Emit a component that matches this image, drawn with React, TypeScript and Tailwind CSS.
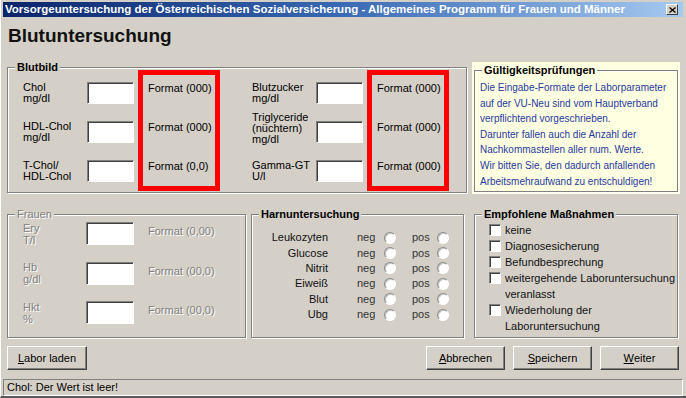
import type { ReactNode } from 'react';

interface LabRow {
  label: string[];
  format: string;
  nudge?: string;
}

const blutLeft: LabRow[] = [
  { label: ['Chol', 'mg/dl'], format: 'Format (000)' },
  { label: ['HDL-Chol', 'mg/dl'], format: 'Format (000)' },
  { label: ['T-Chol/', 'HDL-Chol'], format: 'Format (0,0)' },
];

const blutRight: LabRow[] = [
  { label: ['Blutzucker', 'mg/dl'], format: 'Format (000)' },
  { label: ['Triglyceride', '(nüchtern)', 'mg/dl'], format: 'Format (000)', nudge: 'leading-[10px] -translate-y-[4px]' },
  { label: ['Gamma-GT', 'U/l'], format: 'Format (000)' },
];

const frauenRows: LabRow[] = [
  { label: ['Ery', 'T/l'], format: 'Format (0,00)' },
  { label: ['Hb', 'g/dl'], format: 'Format (00,0)' },
  { label: ['Hkt', '%'], format: 'Format (00,0)' },
];

const harnRows = ['Leukozyten', 'Glucose', 'Nitrit', 'Eiweiß', 'Blut', 'Ubg'];

const massnahmen: string[][] = [
  ['keine'],
  ['Diagnosesicherung'],
  ['Befundbesprechung'],
  ['weitergehende Laboruntersuchung', 'veranlasst'],
  ['Wiederholung der', 'Laboruntersuchung'],
];

const hinweis = [
  'Die Eingabe-Formate der Laborparameter',
  'auf der VU-Neu sind vom Hauptverband',
  'verpflichtend vorgeschrieben.',
  'Darunter fallen auch die Anzahl der',
  'Nachkommastellen aller num. Werte.',
  'Wir bitten Sie, den dadurch anfallenden',
  'Arbeitsmehraufwand zu entschuldigen!',
];

function GroupBox({
  title,
  className = '',
  legendClass = 'bg-[#d4d0c8] font-bold text-black',
  children,
}: {
  title: string;
  className?: string;
  legendClass?: string;
  children: ReactNode;
}) {
  return (
    <div
      className={`relative border border-[#808080] shadow-[inset_1px_1px_0_#ffffff,1px_1px_0_#ffffff] ${className}`}
    >
      <span
        className={`absolute -top-[7px] left-[7px] px-[2px] text-[11px] leading-[12px] ${legendClass}`}
      >
        {title}
      </span>
      {children}
    </div>
  );
}

function Field({ className = 'h-[22px] w-[47px]' }: { className?: string }) {
  return (
    <input
      type="text"
      readOnly
      className={`block border border-t-[#808080] border-l-[#808080] border-r-white border-b-white bg-white shadow-[inset_1px_1px_0_#404040] outline-none ${className}`}
    />
  );
}

function Radio() {
  return (
    <span className="block h-[12px] w-[12px] rounded-full border border-t-[#8a8a8a] border-l-[#8a8a8a] border-r-white border-b-white bg-white shadow-[inset_1px_1px_0_#c8c8c8]" />
  );
}

function Checkbox() {
  return (
    <span className="mt-[2px] block h-[12px] w-[12px] shrink-0 border border-t-[#808080] border-l-[#808080] border-r-white border-b-white bg-white shadow-[inset_1px_1px_0_#404040]" />
  );
}

function Button({ accel, rest, className = '' }: { accel: string; rest: string; className?: string }) {
  return (
    <button
      className={`flex h-[24px] w-[79px] items-center justify-center border border-t-white border-l-white border-r-[#404040] border-b-[#404040] bg-[#d4d0c8] text-[11px] text-black shadow-[inset_-1px_-1px_0_#808080] ${className}`}
    >
      <span className="underline">{accel}</span>
      {rest}
    </button>
  );
}

function LabBlock({ rows, className = '' }: { rows: LabRow[]; className?: string }) {
  return (
    <div className={`flex items-start ${className}`}>
      <div className="mt-[14px] flex flex-col">
        {rows.map((r) => (
          <div key={r.label.join()} className="flex h-[39px] items-start">
            <div
              className={`flex h-[22px] w-[64px] flex-col justify-center text-[11px] leading-[11px] text-black ${r.nudge ?? ''}`}
            >
              {r.label.map((l) => (
                <span key={l} className="whitespace-nowrap">
                  {l}
                </span>
              ))}
            </div>
            <Field />
          </div>
        ))}
      </div>
      {/* red highlight around the format hints */}
      <div className="ml-[4px] mt-[2px] h-[121px] w-[82px] border-[5px] border-[#ff0000] pl-[5px] pt-[7px]">
        {rows.map((r) => (
          <div key={r.label.join()} className="h-[39px] whitespace-nowrap text-[11px] leading-[13px] text-black">
            {r.format}
          </div>
        ))}
      </div>
    </div>
  );
}

export default function App() {
  return (
    <div className="flex h-[398px] w-[686px] flex-col overflow-hidden border-l border-l-white border-b-2 border-b-[#5a5a5a] bg-[#d4d0c8] pl-[2px] pr-[3px] pt-[2px] font-['Liberation_Sans',Arial,sans-serif] text-[11px] text-black">
      {/* Title bar */}
      <div className="flex h-[15px] items-center bg-linear-to-r from-[#0a246a] via-[#3a6ab4] to-[#a6caf0] pl-[2px] pr-[5px]">
        <span className="flex-1 whitespace-nowrap text-[11.5px] font-bold leading-[15px] text-white">
          Vorsorgeuntersuchung der Österreichischen Sozialversicherung - Allgemeines Programm für Frauen und Männer
        </span>
        <span className="flex h-[11px] w-[12px] items-center justify-center border border-t-white border-l-white border-r-[#404040] border-b-[#404040] bg-[#d4d0c8]">
          <svg width="7" height="6" viewBox="0 0 7 6">
            <path d="M0.5 0.5 L6.5 5.5 M6.5 0.5 L0.5 5.5" stroke="#000" strokeWidth="1.3" />
          </svg>
        </span>
      </div>

      {/* Heading */}
      <h1 className="mt-[9px] h-[19px] pl-[5px] text-[19px] font-bold leading-[19px] text-[#111]">Blutuntersuchung</h1>

      {/* Top row */}
      <div className="mt-[17px] flex h-[132px] items-start">
        <GroupBox title="Blutbild" className="ml-[4px] mt-[5px] h-[126px] w-[460px]">
          <div className="flex pl-[15px]">
            <LabBlock rows={blutLeft} />
            <LabBlock rows={blutRight} className="ml-[32px]" />
          </div>
        </GroupBox>

        <div className="ml-[5px] h-[132px] w-[208px] bg-[#ffffe1] px-[2px] pb-[2px] pt-[8px]">
          <GroupBox title="Gültigkeitsprüfungen" className="h-[122px]" legendClass="bg-[#ffffe1] font-bold text-black">
            <div className="pl-[5px] pt-[9px] text-[10px] leading-[15.6px] text-[#1f3aa0]">
              {hinweis.map((l) => (
                <div key={l} className="whitespace-nowrap">
                  {l}
                </div>
              ))}
            </div>
          </GroupBox>
        </div>
      </div>

      {/* Bottom row */}
      <div className="mt-[20px] flex h-[124px]">
        <GroupBox
          title="Frauen"
          className="ml-[4px] h-[124px] w-[239px]"
          legendClass="bg-[#d4d0c8] text-[#808080] [text-shadow:1px_1px_0_#fff]"
        >
          <div className="mt-[7px] flex flex-col pl-[15px]">
            {frauenRows.map((r) => (
              <div key={r.format + r.label[0]} className="flex h-[39.5px] items-start">
                <div className="flex h-[23px] w-[63px] flex-col justify-center text-[11px] leading-[12px] text-[#808080] [text-shadow:1px_1px_0_#fff]">
                  {r.label.map((l) => (
                    <span key={l}>{l}</span>
                  ))}
                </div>
                <Field className="h-[23px] w-[48px]" />
                <span className="ml-[14px] pt-[3px] whitespace-nowrap leading-[13px] text-[#808080] [text-shadow:1px_1px_0_#fff]">
                  {r.format}
                </span>
              </div>
            ))}
          </div>
        </GroupBox>

        <GroupBox title="Harnuntersuchung" className="ml-[5px] h-[124px] w-[213px]">
          <div className="flex flex-col pt-[15px]">
            {harnRows.map((name) => (
              <div key={name} className="flex h-[15.4px] items-center">
                <span className="w-[76px] text-right leading-[13px] text-[#111]">{name}</span>
                <span className="ml-[29px] w-[27px] leading-[13px] text-[#333]">neg</span>
                <Radio />
                <span className="ml-[16px] w-[25px] leading-[13px] text-[#333]">pos</span>
                <Radio />
              </div>
            ))}
          </div>
        </GroupBox>

        <GroupBox title="Empfohlene Maßnahmen" className="ml-[10px] h-[124px] w-[204px]">
          <div className="flex flex-col pl-[14px] pt-[7px]">
            {massnahmen.map((lines) => (
              <div key={lines[0]} className="flex items-start">
                <Checkbox />
                <div className="ml-[4px] leading-[16px] text-[#111]">
                  {lines.map((l) => (
                    <div key={l} className="whitespace-nowrap">
                      {l}
                    </div>
                  ))}
                </div>
              </div>
            ))}
          </div>
        </GroupBox>
      </div>

      {/* Buttons */}
      <div className="mt-[8px] flex h-[24px]">
        <Button accel="L" rest="abor laden" className="ml-[4px] w-[80px]" />
        <div className="flex-1" />
        <div className="mr-[4px] flex gap-[8px]">
          <Button accel="A" rest="bbrechen" />
          <Button accel="S" rest="peichern" />
          <Button accel="W" rest="eiter" />
        </div>
      </div>

      {/* Status bar */}
      <div className="mt-[9px] h-[17px] border border-t-[#808080] border-l-[#808080] border-r-white border-b-white pl-[3px] text-[11px] leading-[15px] text-black">
        Chol: Der Wert ist leer!
      </div>
    </div>
  );
}
